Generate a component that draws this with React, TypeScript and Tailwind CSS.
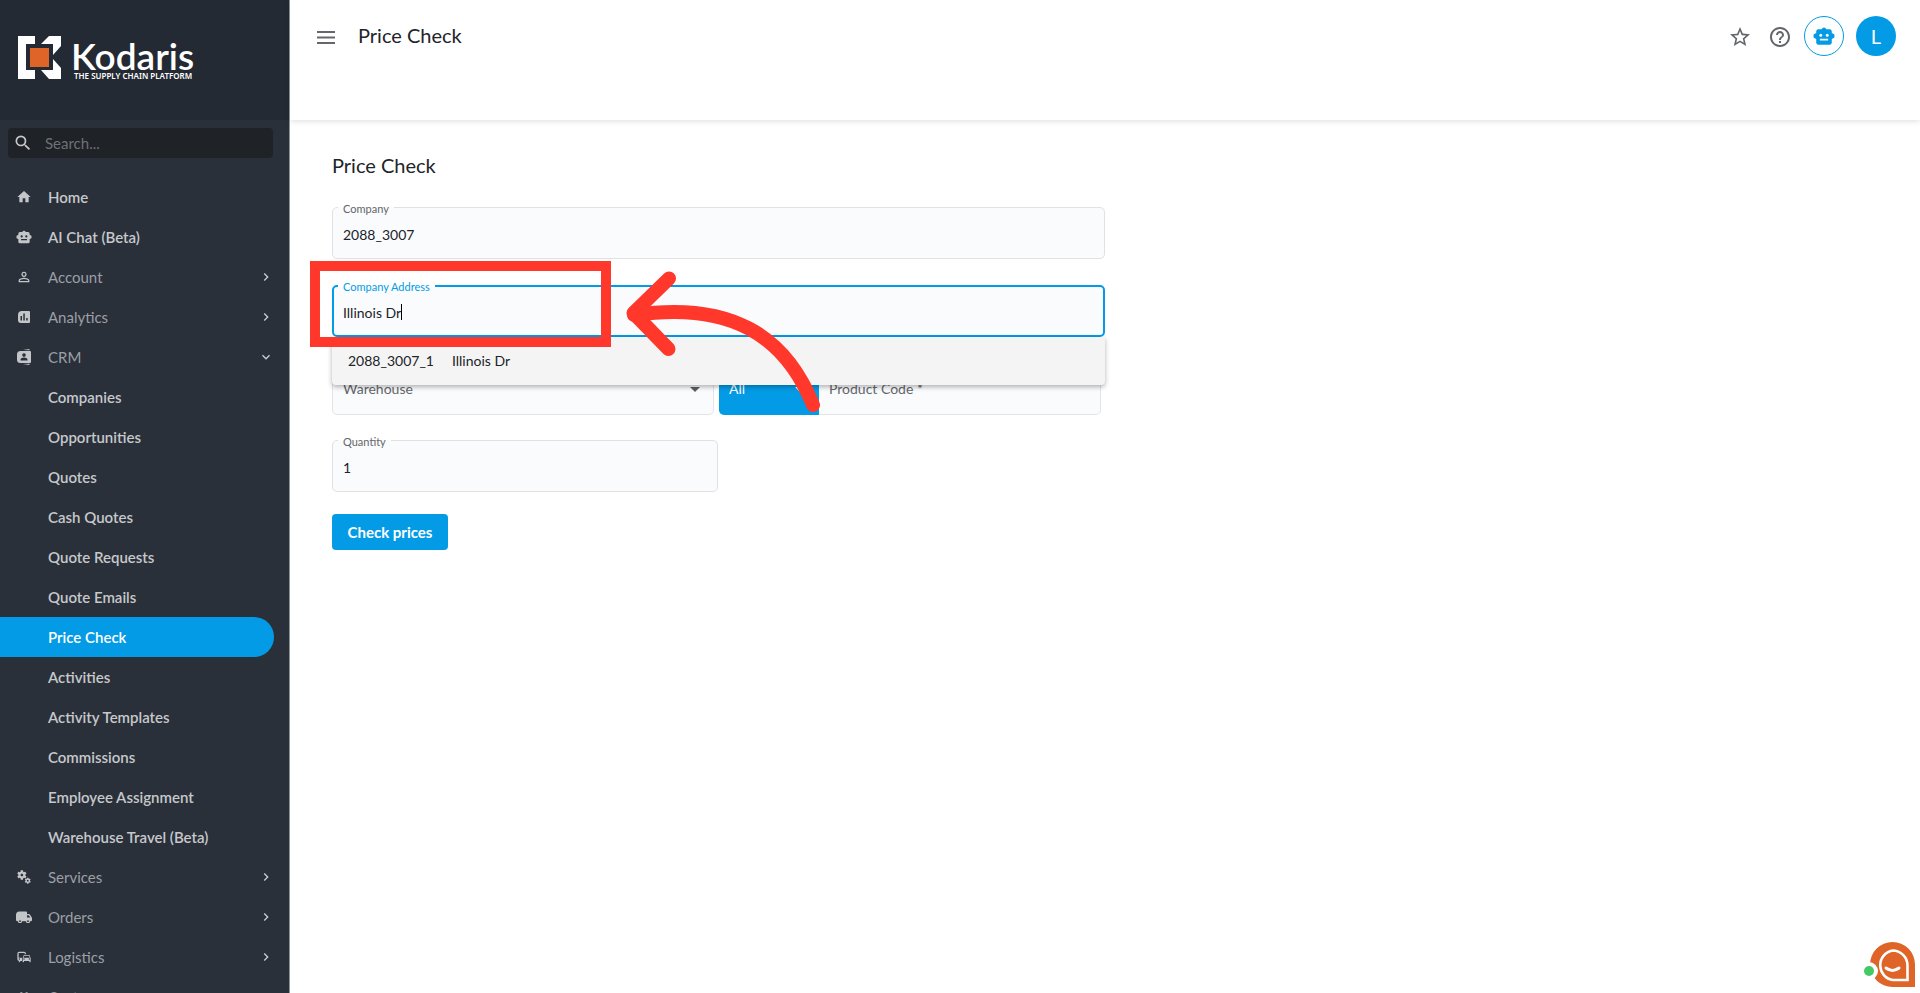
import { useState, type ReactNode } from 'react';
import {
  MdChevronRight,
  MdCommute,
  MdExpandMore,
  MdHelpOutline,
  MdHome,
  MdMiscellaneousServices,
  MdOutlinePersonOutline,
  MdPeople,
  MdSearch,
  MdStarBorder,
} from 'react-icons/md';

function RobotIcon({ className }: { className: string }) {
  return (
    <svg viewBox="0 0 24 24" className={className} fill="currentColor" fillRule="evenodd" aria-hidden="true">
      <path d="M14.500 4.500H18A2.500 2.500 0 0 1 20.500 7v2a3 3 0 0 1 0 6v4a2.500 2.500 0 0 1-2.500 2.500H6A2.500 2.500 0 0 1 3.500 19v-4a3 3 0 0 1 0-6V7A2.500 2.500 0 0 1 6 4.500h3.500a2.600 2.600 0 0 1 5 0ZM8.500 9.500a1.700 1.700 0 1 0 0 3.400 1.700 1.700 0 0 0 0-3.400Zm7 0a1.700 1.700 0 1 0 0 3.400 1.700 1.700 0 0 0 0-3.400ZM7.500 15v2h9v-2Z" />
    </svg>
  );
}

function AnalyticsIcon() {
  return (
    <svg viewBox="0 0 12 12" className="size-3" fill="currentColor" fillRule="evenodd" aria-hidden="true">
      <path d="M4 0h7a1 1 0 0 1 1 1v10a1 1 0 0 1-1 1H3a3 3 0 0 1-3-3V4a4 4 0 0 1 4-4ZM2.500 5v4.500H4V5Zm2.800-2.500v7h1.500v-7ZM8.200 7v2.500h1.500V7Z" />
    </svg>
  );
}

function ContactsIcon() {
  return (
    <svg viewBox="0 0 14 16" className="h-4 w-3.5" fill="currentColor" fillRule="evenodd" aria-hidden="true">
      <path d="M3.500 2H13a1 1 0 0 1 1 1v10a1 1 0 0 1-1 1H3.500A3.500 3.500 0 0 1 0 10.500v-5A3.500 3.500 0 0 1 3.500 2ZM7 4.300a1.800 1.800 0 1 0 0 3.600 1.800 1.800 0 0 0 0-3.600ZM3.500 11.500h7v-.8c0-1.400-1.800-2.100-3.500-2.100s-3.500.7-3.500 2.100ZM6 1l6.500-1v1.200Zm0 14 6.500 1v-1.200Z" />
    </svg>
  );
}

function VanIcon() {
  return (
    <svg viewBox="0 0 16 12" className="h-3 w-4" fill="currentColor" fillRule="evenodd" aria-hidden="true">
      <path d="M3.500.5H10a1 1 0 0 1 1 1V3h1.700a1.500 1.500 0 0 1 1.200.6L15.500 6a2 2 0 0 1 .5 1.200V9a1.300 1.300 0 0 1-1.300 1.300H14a2 2 0 0 1-4 0H6a2 2 0 0 1-4 0h-.5A1.500 1.500 0 0 1 0 8.800V4A3.500 3.500 0 0 1 3.500.5ZM11 4.200v2.300h3.400l-1.600-2.100a.5.5 0 0 0-.4-.2ZM4 9.300a.9.900 0 1 0 0 1.800.9.900 0 0 0 0-1.800Zm8 0a.9.900 0 1 0 0 1.800.9.900 0 0 0 0-1.800Z" />
    </svg>
  );
}

type Item = { label: string; icon?: ReactNode; group?: 'closed' | 'open'; active?: boolean };

const items: Item[] = [
  { label: 'Home', icon: <MdHome className="size-4" /> },
  { label: 'AI Chat (Beta)', icon: <RobotIcon className="size-4" /> },
  { label: 'Account', icon: <MdOutlinePersonOutline className="size-4" />, group: 'closed' },
  { label: 'Analytics', icon: <AnalyticsIcon />, group: 'closed' },
  { label: 'CRM', icon: <ContactsIcon />, group: 'open' },
  { label: 'Companies' },
  { label: 'Opportunities' },
  { label: 'Quotes' },
  { label: 'Cash Quotes' },
  { label: 'Quote Requests' },
  { label: 'Quote Emails' },
  { label: 'Price Check', active: true },
  { label: 'Activities' },
  { label: 'Activity Templates' },
  { label: 'Commissions' },
  { label: 'Employee Assignment' },
  { label: 'Warehouse Travel (Beta)' },
  { label: 'Services', icon: <MdMiscellaneousServices className="size-4" />, group: 'closed' },
  { label: 'Orders', icon: <VanIcon />, group: 'closed' },
  { label: 'Logistics', icon: <MdCommute className="size-4" />, group: 'closed' },
  { label: 'Customers', icon: <MdPeople className="size-4" />, group: 'closed' },
];

function NavItem({ item }: { item: Item }) {
  const content = (
    <>
      <span className="flex w-12 shrink-0 justify-center text-[#c3c5c9]">{item.icon}</span>
      <span className="grow text-left">{item.label}</span>
      {item.group === 'closed' && <MdChevronRight className="size-4 text-[#c9cbce]" />}
      {item.group === 'open' && <MdExpandMore className="size-4 text-[#c9cbce]" />}
    </>
  );
  return (
    <li>
      {item.group ? (
        <button type="button" aria-expanded={item.group === 'open'} className="flex h-10 w-[274px] items-center text-[15px] text-[#9c9fa5]">
          {content}
        </button>
      ) : (
        <a
          href="#"
          aria-current={item.active ? 'page' : undefined}
          className={
            item.active
              ? 'flex h-10 w-[274px] items-center rounded-r-full bg-[#039be5] text-[15px] font-semibold text-white'
              : 'flex h-10 w-[274px] items-center text-[15px] font-semibold text-[#c6c8cb]'
          }
        >
          {content}
        </a>
      )}
    </li>
  );
}

function Sidebar() {
  return (
    <aside className="flex w-[290px] shrink-0 flex-col overflow-hidden border-r border-[#8f9296] bg-[#2a303a]">
      <div className="flex h-[120px] shrink-0 items-center bg-[#242a33] pb-1 pl-[18px]">
        <a href="#" aria-label="Kodaris home" className="flex">
          <svg width="200" height="48" viewBox="0 0 200 48" aria-hidden="true">
            <g fill="#fff">
              <path d="M0 2h17v8H8v26h9v9H0Z" />
              <path d="M31 2h12v10l-8 9V10H23Z" />
              <path d="M35 25l8 9v11H31l-8-9h12Z" />
            </g>
            <path d="M12 14h19v19H12Z" fill="#de6427" />
            <text x="53" y="36" fill="#fff" fontFamily="Lato, sans-serif" fontSize="37" fontWeight="600">
              Kodaris
            </text>
            <text x="56" y="45" fill="#fff" fontFamily="Noto Sans, sans-serif" fontSize="8" fontWeight="600">
              THE SUPPLY CHAIN PLATFORM
            </text>
          </svg>
        </a>
      </div>
      <label className="mx-2 mt-2 flex h-[30px] w-[265px] shrink-0 items-center gap-3 rounded bg-[#1f2328] pl-[5px]">
        <MdSearch className="size-5 text-[#c6c8cb]" />
        <input
          type="search"
          aria-label="Search"
          placeholder="Search..."
          className="min-w-0 grow bg-transparent text-[15px] text-white outline-none placeholder:text-[#6d7076]"
        />
      </label>
      <nav aria-label="Main" className="min-h-0 grow overflow-hidden pt-[19px]">
        <ul>
          {items.map((item) => (
            <NavItem key={item.label} item={item} />
          ))}
        </ul>
      </nav>
    </aside>
  );
}

function Header() {
  return (
    <header className="flex h-[120px] shrink-0 items-start bg-white pt-4 pr-6 pl-[27px] shadow-[0_1px_6px_rgba(0,0,0,0.14)]">
      <div className="flex h-[38px] grow items-center gap-[23px]">
        <button type="button" aria-label="Toggle menu" className="text-[#66676e]">
          <svg width="18" height="13" viewBox="0 0 18 13" fill="currentColor" className="mt-1" aria-hidden="true">
            <path d="M0 0h18v2H0ZM0 5.500h18v2H0ZM0 11h18v2H0Z" />
          </svg>
        </button>
        <h1 className="text-xl text-[#212429]">Price Check</h1>
      </div>
      <div className="flex h-10 items-center">
        <button type="button" aria-label="Add to favorites" className="mr-4 pt-0.5 text-[#63656a]">
          <MdStarBorder className="size-6" />
        </button>
        <button type="button" aria-label="Help" className="mr-3 pt-0.5 text-[#63656a]">
          <MdHelpOutline className="size-6" />
        </button>
        <button
          type="button"
          aria-label="AI assistant"
          className="mr-3 flex size-10 items-center justify-center rounded-full border border-[#039be5] text-[#039be5]"
        >
          <RobotIcon className="size-[22px]" />
        </button>
        <button type="button" aria-label="Account" className="size-10 rounded-full bg-[#039be5] text-xl text-white">
          L
        </button>
      </div>
    </header>
  );
}

type FieldProps = { id: string; label: string; value: string; focused?: boolean; onChange: (value: string) => void };

function Field({ id, label, value, focused, onChange }: FieldProps) {
  return (
    <div
      className={
        focused
          ? 'relative h-[52px] rounded-[5px] border-2 border-[#039be5] bg-[#fafbfd]'
          : 'relative h-[52px] rounded-[5px] border border-[#e0e1e3] bg-[#fafbfd] p-px'
      }
    >
      <label
        htmlFor={id}
        className={
          focused
            ? 'absolute -top-2 left-1 bg-linear-to-b from-white from-50% to-[#fafbfd] to-50% px-[5px] text-[11px] leading-4 text-[#039be5]'
            : 'absolute -top-[7px] left-[5px] bg-linear-to-b from-white from-40% to-[#fafbfd] to-40% px-[5px] text-[11px] leading-4 text-[#63666b]'
        }
      >
        {label}
      </label>
      <input
        id={id}
        value={value}
        onChange={(event) => onChange(event.target.value)}
        autoComplete="off"
        className="size-full bg-transparent pt-0.5 pl-[9px] text-sm text-[#212429] outline-none"
      />
    </div>
  );
}

function PriceCheckForm() {
  const [company, setCompany] = useState('2088_3007');
  const [address, setAddress] = useState('Illinois Dr');
  const [quantity, setQuantity] = useState('1');
  return (
    <form className="relative flex w-full max-w-[773px] flex-col" onSubmit={(event) => event.preventDefault()}>
      <h2 className="mb-7 text-xl leading-7 text-[#212429]">Price Check</h2>
      <Field id="company" label="Company" value={company} onChange={setCompany} />
      <div className="relative mt-[26px]">
        <Field id="address" label="Company Address" value={address} focused onChange={setAddress} />
        <span className="absolute top-[19px] left-[69px] h-4 w-px bg-black" />
        <ul
          role="listbox"
          aria-label="Company addresses"
          className="absolute top-[52px] right-0 left-0 z-10 rounded-b bg-[#f4f4f4] shadow-[0_2px_5px_rgba(0,0,0,0.3)]"
        >
          <li role="option" aria-selected="true" className="flex h-12 items-center gap-[18px] px-4 text-sm text-[#212429]">
            <span>2088_3007_1</span>
            <span>Illinois Dr</span>
          </li>
        </ul>
      </div>
      <div className="mt-[26px] mr-1 flex h-[52px] gap-[5px]">
        <div className="relative w-[382px]">
          <select
            aria-label="Warehouse"
            className="size-full appearance-none rounded-[5px] border border-[#e3e4e6] bg-[#fafbfd] pl-2.5 text-sm text-[#63666b] outline-none"
          >
            <option>Warehouse</option>
          </select>
          <svg width="10" height="5" viewBox="0 0 10 5" className="pointer-events-none absolute top-6 right-[14px] text-[#5b5e63]" aria-hidden="true">
            <path d="M0 0h10L5 5Z" fill="currentColor" />
          </svg>
        </div>
        <div className="flex grow">
          <div className="relative w-[100px]">
            <select aria-label="Search by" className="size-full appearance-none rounded-l-[5px] bg-[#039be5] pl-2.5 text-sm text-white outline-none">
              <option>All</option>
            </select>
            <svg width="10" height="5" viewBox="0 0 10 5" className="pointer-events-none absolute top-6 right-[14px] text-white" aria-hidden="true">
              <path d="M0 0h10L5 5Z" fill="currentColor" />
            </svg>
          </div>
          <input
            aria-label="Product Code"
            placeholder="Product Code *"
            className="min-w-0 grow rounded-r-[5px] border border-l-0 border-[#e3e4e6] bg-[#fafbfd] pl-2.5 text-sm outline-none placeholder:text-[#63666b]"
          />
        </div>
      </div>
      <div className="mt-[25px] w-[386px]">
        <Field id="quantity" label="Quantity" value={quantity} onChange={setQuantity} />
      </div>
      <button type="submit" className="mt-[22px] h-9 w-[116px] rounded bg-[#039be5] text-[15px] font-bold text-white">
        Check prices
      </button>
      <div className="pointer-events-none absolute top-[110px] left-[-22px] z-20 h-[86px] w-[301px] border-10 border-[#ff382b]" />
      <svg
        width="200"
        height="150"
        viewBox="620 265 200 150"
        className="pointer-events-none absolute top-[114px] left-[288px] z-20"
        fill="none"
        stroke="#ff382b"
        strokeWidth="14"
        strokeLinecap="round"
        strokeLinejoin="round"
        aria-hidden="true"
      >
        <path d="M669 278.500 633.500 313 668.500 349" />
        <path d="M634 315C730 301 785 335 813 405" />
      </svg>
    </form>
  );
}

function ChatLauncher() {
  return (
    <button type="button" aria-label="Open chat" className="fixed right-[5px] bottom-[5px]">
      <svg width="53" height="46" viewBox="1862 943 53 46" aria-hidden="true">
        <path d="M1892.500 943a22.500 22.500 0 0 1 22.500 22.500V988h-22.500a22.500 22.500 0 0 1 0-45Z" fill="#de6427" />
        <circle cx="1869" cy="972" r="9" fill="#fff" />
        <path d="M1892.500 951.500a15 15 0 0 1 15 15v14.500h-15a15 15 0 0 1 0-29.500Z" fill="none" stroke="#fff" strokeWidth="2.600" />
        <path d="M1886 969q6.500 5 13 0" fill="none" stroke="#fff" strokeWidth="3" strokeLinecap="round" />
        <circle cx="1869" cy="972" r="5" fill="#45c967" />
      </svg>
    </button>
  );
}

export default function App() {
  return (
    <div className="flex h-screen overflow-hidden bg-white font-[Lato,sans-serif]">
      <Sidebar />
      <div className="flex min-w-0 grow flex-col">
        <Header />
        <main className="min-h-0 grow px-[42px] pt-[31px]">
          <PriceCheckForm />
        </main>
      </div>
      <ChatLauncher />
    </div>
  );
}
